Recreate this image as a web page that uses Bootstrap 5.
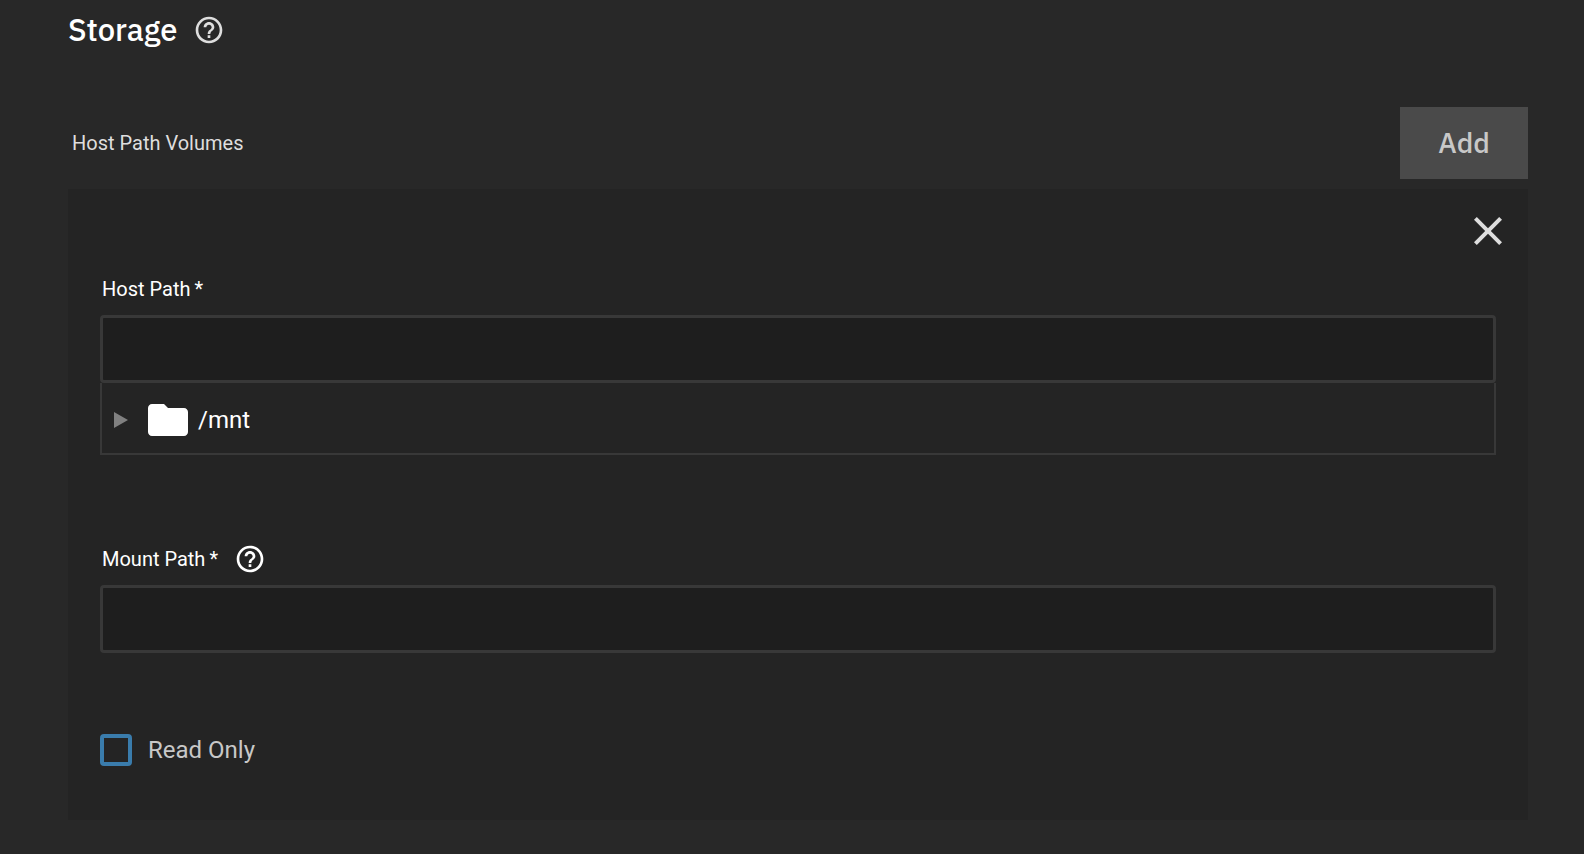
<!DOCTYPE html>
<html lang="en">
<head>
<meta charset="utf-8">
<meta name="viewport" content="width=device-width, initial-scale=1">
<title>Storage</title>
<link href="https://cdn.jsdelivr.net/npm/bootstrap@5.3.0/dist/css/bootstrap.min.css" rel="stylesheet">
<style>
body { background: #282828; color: #fff; font-family: Roboto, "Liberation Sans", sans-serif; font-size: 20px; line-height: 24px; }
.page { padding: 14px 56px 34px 68px; }
.title, .add-btn { font-family: "IBM Plex Sans", "Noto Sans", sans-serif; line-height: 32px; font-weight: 500; }
.title { font-size: 31px; }
.help { width: 32px; height: 32px; fill: currentColor; display: block; }
.soft, .soft:hover { color: #dedede; }
.list-head { margin-top: 61px; padding-left: 4px; }
.add-btn { width: 128px; height: 72px; background: #4a4a4a; color: #c8c8c8; font-size: 28px; border: 0; border-radius: 0; }
.add-btn:hover { background: #555; color: #fff; }
.panel { background: #242424; margin-top: 10px; padding: 18px 32px 54px; }
.close-btn { margin-right: -16px; }
.close-btn svg, .folder { width: 48px; height: 48px; fill: currentColor; display: block; }
.field-label { height: 32px; padding-left: 2px; margin-bottom: 10px; gap: 16px; }
.required-mark { margin-left: 4px; }
.host { margin-top: 18px; }
.mount { margin-top: 88px; }
.field, .field:focus { height: 68px; background: #1e1e1e; border: 3px solid #383838; border-radius: 4px; color: #fff; font-size: 24px; }
.field:focus { border-color: #3a7cac; box-shadow: none; }
.tree { height: 72px; border: 2px solid #383838; border-top: 0; padding: 4px 0 0 12px; font-size: 24px; }
.arrow { width: 14px; height: 16px; fill: #808080; display: block; }
.tree .folder { margin-left: 16px; margin-right: 6px; }
.read-only { margin-top: 81px; gap: 16px; font-size: 24px; line-height: 32px; color: #c8c8c8; }
.read-only .form-check-input { width: 32px; height: 32px; border: 4px solid #3a7cac; border-radius: 4px; background-color: transparent; }
.read-only .form-check-input:checked { background-color: #3a7cac; }
</style>
</head>
<body>
<svg class="d-none" aria-hidden="true">
  <symbol id="help" viewBox="0 0 24 24"><path d="M11 18h2v-2h-2v2zm1-16C6.480 2 2 6.480 2 12s4.480 10 10 10 10-4.480 10-10S17.520 2 12 2zm0 18c-4.410 0-8-3.590-8-8s3.590-8 8-8 8 3.590 8 8-3.590 8-8 8zm0-14c-2.210 0-4 1.790-4 4h2c0-1.100.9-2 2-2s2 .9 2 2c0 2-3 1.750-3 5h2c0-2.250 3-2.500 3-5 0-2.210-1.790-4-4-4z"/></symbol>
</svg>
<main class="page">
  <div class="d-flex align-items-center gap-3">
    <h1 class="title m-0">Storage</h1>
    <button type="button" class="btn border-0 p-0 soft" aria-label="About storage"><svg class="help"><use href="#help"/></svg></button>
  </div>
  <div class="list-head d-flex align-items-center justify-content-between">
    <span class="soft">Host Path Volumes</span>
    <button type="button" class="btn add-btn">Add</button>
  </div>
  <form class="panel" aria-label="Host path volume">
    <div class="d-flex justify-content-end">
      <button type="button" class="btn border-0 p-0 close-btn soft" aria-label="Remove"><svg viewBox="0 0 24 24"><path d="M19 6.410 17.590 5 12 10.590 6.410 5 5 6.410 10.590 12 5 17.590 6.410 19 12 13.410 17.590 19 19 17.590 13.410 12z"/></svg></button>
    </div>
    <div class="host">
      <div class="field-label d-flex align-items-center"><label for="hostPath">Host Path<span class="required-mark">*</span></label></div>
      <input type="text" id="hostPath" class="form-control field" required>
      <div class="tree d-flex align-items-center">
        <button type="button" class="btn border-0 p-0" aria-label="Expand /mnt"><svg class="arrow" viewBox="0 0 14 16"><path d="M0 0 14 8 0 16z"/></svg></button>
        <svg class="folder" viewBox="0 0 24 24" aria-hidden="true"><path d="M10 4H4c-1.100 0-1.990.9-1.990 2L2 18c0 1.100.9 2 2 2h16c1.100 0 2-.9 2-2V8c0-1.100-.9-2-2-2h-8l-2-2z"/></svg>
        <span>/mnt</span>
      </div>
    </div>
    <div class="mount">
      <div class="field-label d-flex align-items-center">
        <label for="mountPath">Mount Path<span class="required-mark">*</span></label>
        <button type="button" class="btn border-0 p-0 text-white" aria-label="About mount path"><svg class="help"><use href="#help"/></svg></button>
      </div>
      <input type="text" id="mountPath" class="form-control field" required>
    </div>
    <div class="read-only d-flex align-items-center">
      <input type="checkbox" id="readOnly" class="form-check-input m-0">
      <label for="readOnly">Read Only</label>
    </div>
  </form>
</main>
<script src="https://cdn.jsdelivr.net/npm/bootstrap@5.3.0/dist/js/bootstrap.bundle.min.js"></script>
</body>
</html>
